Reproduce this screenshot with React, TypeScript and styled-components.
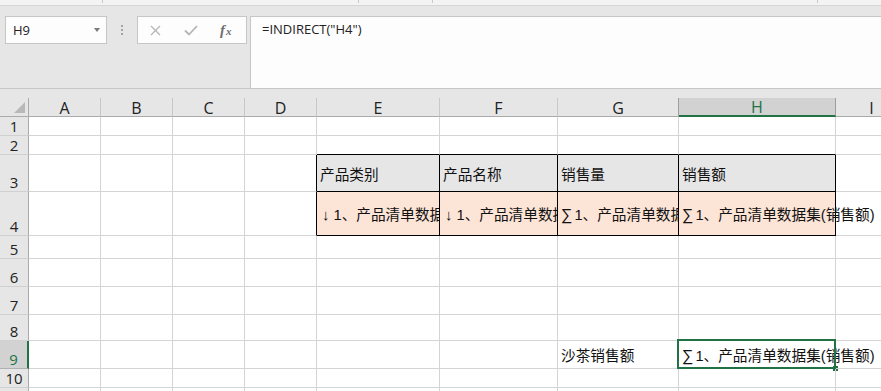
import styled, { createGlobalStyle } from 'styled-components';

const GlobalStyle = createGlobalStyle`
  html, body { margin: 0; padding: 0; background: #fff; }
  body { font-family: 'Open Sans', 'Liberation Sans', sans-serif; }
  * { box-sizing: border-box; }
`;

const GREEN = '#217346';
const COLS = ['A', 'B', 'C', 'D', 'E', 'F', 'G', 'H', 'I'];
const COL_WIDTHS = [72, 72, 72, 72, 123, 118, 121, 157, 72];
const ROW_HEIGHTS = [19, 19, 37, 44, 23, 28, 28, 26, 28, 19, 19];
const RIBBON_GROUPS = [103, 256, 74, 385];
const ACTIVE = { col: 'H', row: 9 };

type CellData = { text: string; fill?: string; spill?: boolean };

const cells: Record<string, CellData> = {
  E3: { text: '产品类别', fill: '#e7e6e6' },
  F3: { text: '产品名称', fill: '#e7e6e6' },
  G3: { text: '销售量', fill: '#e7e6e6' },
  H3: { text: '销售额', fill: '#e7e6e6' },
  E4: { text: '↓1、产品清单数据集(产品类别)', fill: '#fce4d6' },
  F4: { text: '↓1、产品清单数据集(产品名称)', fill: '#fce4d6' },
  G4: { text: '∑1、产品清单数据集(销售量)', fill: '#fce4d6' },
  H4: { text: '∑1、产品清单数据集(销售额)', fill: '#fce4d6', spill: true },
  G9: { text: '沙茶销售额' },
  H9: { text: '∑1、产品清单数据集(销售额)', spill: true },
};

// bordered table E3:H4
const inTable = (c: number, r: number) => c >= 4 && c <= 7 && r >= 3 && r <= 4;

// the leading field marker (↓ group, ∑ sum) is set a little apart, as in the sheet
function CellText({ text }: { text?: string }) {
  if (!text) return null;
  const first = text[0];
  if (first === '↓' || first === '∑') {
    return (
      <>
        <Marker $kind={first}>{first}</Marker>
        {text.slice(1)}
      </>
    );
  }
  return <>{text}</>;
}

export default function App() {
  return (
    <Workbook>
      <GlobalStyle />
      <RibbonEdge>
        {RIBBON_GROUPS.map((w, i) => (
          <RibbonGroup key={i} $width={w} />
        ))}
      </RibbonEdge>

      <FormulaBar>
        <NameBox>
          H9
          <Caret />
        </NameBox>
        <Grip>
          <i />
          <i />
          <i />
        </Grip>
        <FxBox>
          <svg width="11" height="11" viewBox="0 0 11 11">
            <path d="M1 1L10 10M10 1L1 10" stroke="#b5b5b5" strokeWidth="1.3" fill="none" />
          </svg>
          <svg width="14" height="11" viewBox="0 0 14 11">
            <path d="M1 5.5L5 9.5L13 1" stroke="#b5b5b5" strokeWidth="1.8" fill="none" />
          </svg>
          <FxMark>
            f<sub>x</sub>
          </FxMark>
        </FxBox>
        <FormulaInput>=INDIRECT("H4")</FormulaInput>
      </FormulaBar>

      <Sheet>
        <Corner>
          <svg width="11" height="11" viewBox="0 0 11 11">
            <path d="M11 0V11H0Z" fill="#b9b9b9" />
          </svg>
        </Corner>
        {COLS.map((c, i) => (
          <ColHead
            key={c}
            $active={c === ACTIVE.col}
            $edge={COLS[i + 1] === ACTIVE.col}
          >
            {c}
          </ColHead>
        ))}

        {ROW_HEIGHTS.map((_, ri) => {
          const r = ri + 1;
          return [
            <RowHead key={`r${r}`} $active={r === ACTIVE.row}>
              {r}
            </RowHead>,
            ...COLS.map((c, ci) => {
              const id = `${c}${r}`;
              const data = cells[id];
              const right = inTable(ci, r) || inTable(ci + 1, r) ? '#000' : '#d4d4d4';
              const bottom = inTable(ci, r) || inTable(ci, r + 1) ? '#000' : '#d4d4d4';
              const selected = c === ACTIVE.col && r === ACTIVE.row;
              return (
                <Cell
                  key={id}
                  $fill={data?.fill}
                  $right={data?.spill && !inTable(ci, r) ? 'transparent' : right}
                  $bottom={bottom}
                  $spill={data?.spill}
                >
                  <CellText text={data?.text} />
                  {selected && (
                    <Selection>
                      <FillHandle />
                    </Selection>
                  )}
                </Cell>
              );
            }),
          ];
        })}
      </Sheet>
    </Workbook>
  );
}

const Workbook = styled.div`
  width: 881px;
  height: 391px;
  overflow: hidden;
  display: flex;
  flex-direction: column;
  background: #e6e6e6;
`;

const RibbonEdge = styled.div`
  height: 6px;
  flex: none;
  display: flex;
  align-items: flex-start;
  background: #f3f3f3;
  border-bottom: 1px solid #d5d5d5;
`;

const RibbonGroup = styled.div<{ $width: number }>`
  width: ${p => p.$width}px;
  height: 3px;
  border-right: 1px solid #c9c9c9;
`;

const FormulaBar = styled.div`
  height: 83px;
  flex: none;
  display: flex;
  align-items: flex-start;
  padding-top: 10px;
  border-bottom: 1px solid #c6c6c6;
`;

const NameBox = styled.div`
  width: 102px;
  height: 28px;
  margin-left: 5px;
  display: flex;
  align-items: center;
  justify-content: space-between;
  padding: 0 6px 0 7px;
  background: #fdfdfd;
  border: 1px solid #c6c6c6;
  font-size: 13px;
  color: #222;
`;

const Caret = styled.span`
  width: 0;
  height: 0;
  border-left: 3.5px solid transparent;
  border-right: 3.5px solid transparent;
  border-top: 4px solid #7a7a7a;
`;

const Grip = styled.div`
  height: 28px;
  margin-left: 14px;
  display: flex;
  flex-direction: column;
  justify-content: center;
  gap: 2px;

  i {
    width: 2px;
    height: 2px;
    background: #a3a3a3;
  }
`;

const FxBox = styled.div`
  width: 110px;
  height: 28px;
  margin-left: 14px;
  display: flex;
  align-items: center;
  gap: 24px;
  padding-left: 12px;
  background: #fdfdfd;
  border: 1px solid #c6c6c6;

  svg + svg {
    margin-left: -1px;
  }
`;

const FxMark = styled.span`
  margin-left: -2px;
  font-family: 'Liberation Serif', serif;
  font-style: italic;
  font-weight: bold;
  font-size: 15px;
  color: #6f6f6f;

  sub {
    font-size: 11px;
    vertical-align: 0;
    margin-left: 1px;
  }
`;

const FormulaInput = styled.div`
  flex: 1;
  height: 72px;
  margin-left: 3px;
  margin-right: -4px;
  padding: 4px 11px;
  background: #fdfdfd;
  border: 1px solid #c6c6c6;
  border-bottom: 0;
  font-size: 13px;
  line-height: 16px;
  color: #222;
`;

const Sheet = styled.div`
  flex: 1;
  margin-top: 9px;
  display: grid;
  grid-template-columns: 29px ${COL_WIDTHS.map(w => `${w}px`).join(' ')};
  grid-template-rows: 19px ${ROW_HEIGHTS.map(h => `${h}px`).join(' ')};
  background: #fff;
`;

const Corner = styled.div`
  display: flex;
  align-items: flex-end;
  justify-content: flex-end;
  padding: 0 3px 3px 0;
  background: #e6e6e6;
  border-right: 1px solid #ababab;
  border-bottom: 1px solid #ababab;
`;

const ColHead = styled.div<{ $active?: boolean; $edge?: boolean }>`
  display: flex;
  align-items: flex-end;
  justify-content: center;
  background: ${p => (p.$active ? '#d2d2d2' : '#e6e6e6')};
  border-right: 1px solid ${p => (p.$active || p.$edge ? '#9e9e9e' : '#c8c8c8')};
  border-bottom: ${p => (p.$active ? `2px solid ${GREEN}` : '1px solid #ababab')};
  font-size: 16px;
  line-height: 1;
  color: ${p => (p.$active ? GREEN : '#222')};
`;

const RowHead = styled.div<{ $active?: boolean }>`
  display: flex;
  align-items: flex-end;
  justify-content: center;
  padding-bottom: 1px;
  background: ${p => (p.$active ? '#d2d2d2' : '#e6e6e6')};
  border-right: ${p => (p.$active ? `2px solid ${GREEN}` : '1px solid #ababab')};
  border-bottom: 1px solid ${p => (p.$active ? '#b0b0b0' : '#d0d0d0')};
  font-size: 15px;
  line-height: 1;
  color: ${p => (p.$active ? GREEN : '#222')};
`;

const Cell = styled.div<{ $fill?: string; $right: string; $bottom: string; $spill?: boolean }>`
  position: relative;
  min-width: 0;
  display: flex;
  align-items: center;
  padding: 3px 2px 0 3px;
  background: ${p => p.$fill ?? 'transparent'};
  border-right: 1px solid ${p => p.$right};
  border-bottom: 1px solid ${p => p.$bottom};
  overflow: ${p => (p.$spill ? 'visible' : 'hidden')};
  white-space: nowrap;
  font-family: 'Liberation Sans', 'Noto Sans CJK SC', sans-serif;
  font-size: 14.67px;
  line-height: 18px;
  color: #111;
`;

const Marker = styled.span<{ $kind: string }>`
  flex: none;
  font-size: ${p => (p.$kind === '∑' ? '16px' : '15px')};
  margin: ${p => (p.$kind === '∑' ? '0 2px 0 0' : '0 4px 0 2px')};
`;

const Selection = styled.div`
  position: absolute;
  top: -2px;
  left: -2px;
  right: -1px;
  bottom: -1px;
  border: 2px solid ${GREEN};
  pointer-events: none;
`;

const FillHandle = styled.div`
  position: absolute;
  right: -4px;
  bottom: -4px;
  width: 5px;
  height: 5px;
  background: ${GREEN};
`;
